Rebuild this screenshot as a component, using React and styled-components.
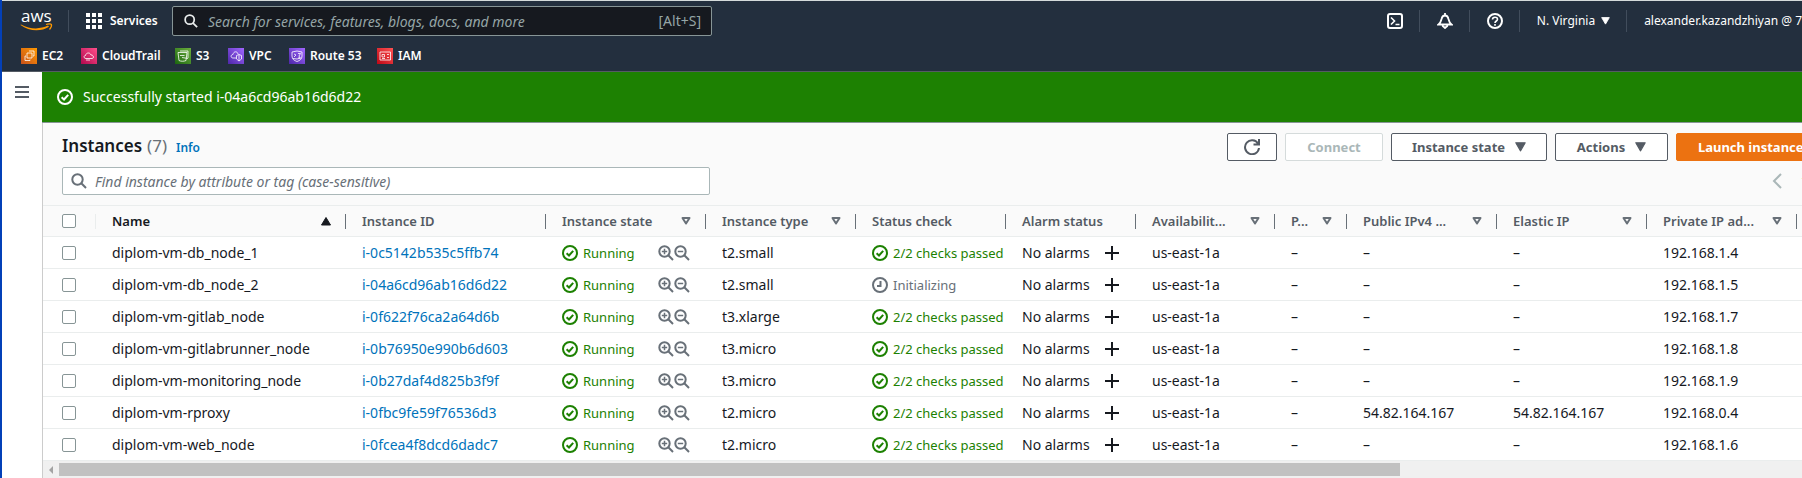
import React from "react";
import styled, { createGlobalStyle } from "styled-components";

const GlobalStyle = createGlobalStyle`
  *, *::before, *::after { box-sizing: border-box; }
  body {
    margin: 0;
    background: #fff;
    color: #16191f;
    font-family: "Noto Sans", "Open Sans", sans-serif;
    font-size: 14px;
    line-height: 20px;
  }
  button, input { font-family: inherit; }
`;

const Page = styled.div`
  min-height: 100vh;
  display: flex;
  flex-direction: column;
  overflow: hidden;
  border-left: 2px solid #0340b8;
`;

/* ---------- top navigation ---------- */

const Header = styled.header`
  background: #232f3e;
  border-top: 1px solid #d5dbdb;
  border-bottom: 1px solid #545b64;
  color: #fff;
`;

const TopBar = styled.div`
  display: flex;
  align-items: center;
  height: 42px;
  padding-bottom: 2px;
`;

const HomeLink = styled.a`
  display: flex;
  padding: 0 14px 0 18px;
`;

const Divider = styled.span`
  flex: none;
  width: 1px;
  height: 22px;
  background: #414d5c;
`;

const NavButton = styled.button`
  display: flex;
  align-items: center;
  gap: ${(p) => p.$gap || 8}px;
  flex: none;
  width: ${(p) => (p.$width ? p.$width + "px" : "auto")};
  height: 30px;
  padding: 0 16px 0 17px;
  border: 0;
  background: none;
  color: #fff;
  font-size: 12px;
  font-weight: ${(p) => (p.$strong ? 600 : 400)};
  line-height: 16px;
  white-space: nowrap;
  &:last-child { padding-right: 0; }
`;

const GlobalSearch = styled.label`
  display: flex;
  align-items: center;
  flex: 0 1 540px;
  height: 30px;
  padding: 0 10px 0 11px;
  border: 1px solid #879596;
  border-radius: 2px;
  background: #16191f;
  color: #95a5a6;
`;

const SearchInput = styled.input`
  flex: 1;
  min-width: 0;
  margin-left: ${(p) => p.$inset}px;
  padding: 0;
  border: 0;
  outline: 0;
  background: none;
  color: inherit;
  font-size: 14px;
  &::placeholder { color: ${(p) => p.$hint}; font-style: italic; opacity: 1; }
`;

const NavGroup = styled.nav`
  display: flex;
  align-items: center;
  flex: none;
  margin-left: auto;
`;

const Favorites = styled.nav`
  display: flex;
  align-items: flex-start;
  height: 28px;
  padding: 5px 19px 0;
`;

const Favorite = styled.a`
  display: flex;
  align-items: center;
  gap: 5px;
  flex: none;
  width: ${(p) => p.$width}px;
  height: 16px;
  color: #fff;
  font-size: 12px;
  font-weight: 600;
  line-height: 16px;
  text-decoration: none;
  white-space: nowrap;
`;

/* ---------- page body ---------- */

const Body = styled.div`
  flex: 1;
  display: flex;
`;

const Rail = styled.aside`
  flex: none;
  width: 40px;
  padding: 13px;
`;

const MenuButton = styled.button`
  display: block;
  padding: 0;
  border: 0;
  background: none;
  line-height: 0;
`;

const Main = styled.main`
  flex: 1;
  min-width: 0;
  display: flex;
  flex-direction: column;
`;

const Flash = styled.div`
  display: flex;
  align-items: center;
  gap: 10px;
  height: 51px;
  padding: 0 15px;
  border-bottom: 1px solid #879596;
  background: #1d8102;
  color: #fff;
`;

const Panel = styled.section`
  flex: 1;
  display: flex;
  flex-direction: column;
  border-left: 1px solid #ccc;
  background: #fff;
`;

const PanelHeader = styled.div`
  padding: 10px 0 10px 19px;
  background: #fafafa;
`;

const PanelRow = styled.div`
  display: flex;
  align-items: center;
  justify-content: space-between;
  height: ${(p) => p.$height}px;
  margin-bottom: ${(p) => p.$after || 0}px;
`;

const Title = styled.h1`
  display: flex;
  align-items: baseline;
  margin: 0;
  font-size: 17px;
  line-height: 22px;
  font-weight: 600;
`;

const Count = styled.span`
  margin-left: 5px;
  color: #687078;
  font-weight: 400;
`;

const InfoLink = styled.a`
  margin-left: 9px;
  color: #0073bb;
  font-size: 12px;
  font-weight: 600;
  text-decoration: none;
`;

const ButtonGroup = styled.div`
  display: flex;
  gap: 8px;
  flex: none;
  margin-right: -30px;
`;

const tones = {
  normal: ["#fff", "#545b64", "#545b64"],
  disabled: ["#fff", "#d5dbdb", "#aab7b8"],
  primary: ["#ec7211", "#ec7211", "#fff"],
};

const Button = styled.button`
  display: flex;
  align-items: center;
  justify-content: center;
  gap: 10px;
  flex: none;
  width: ${(p) => p.$width}px;
  height: 28px;
  padding: 0;
  border: 1px solid ${(p) => tones[p.$tone || "normal"][1]};
  border-radius: 2px;
  background: ${(p) => tones[p.$tone || "normal"][0]};
  color: ${(p) => tones[p.$tone || "normal"][2]};
  font-size: 13px;
  font-weight: 700;
  line-height: 20px;
  white-space: nowrap;
`;

const FilterBox = styled.label`
  display: flex;
  align-items: center;
  flex: 0 1 648px;
  height: 28px;
  padding: 0 8px;
  border: 1px solid #aab7b8;
  border-radius: 2px;
  background: #fff;
`;

const Pager = styled.nav`
  display: flex;
  align-items: center;
  gap: 19px;
  flex: none;
  margin-right: -7px;
`;

const PagerButton = styled.button`
  padding: 0;
  border: 0;
  background: none;
  color: ${(p) => (p.disabled ? "#aab7b8" : "#ec7211")};
  font-size: 14px;
  font-weight: 600;
  line-height: 0;
`;

/* ---------- table ---------- */

const TableClip = styled.div`
  overflow: hidden;
`;

const Table = styled.table`
  width: 100%;
  table-layout: fixed;
  border-collapse: separate;
  border-spacing: 0;
`;

const Col = styled.col`
  width: ${(p) => (p.$width ? p.$width + "px" : "auto")};
`;

const HeadCell = styled.th`
  height: 32px;
  padding: 0;
  border-top: 1px solid #eaeded;
  border-bottom: 1px solid #eaeded;
  background: #fafafa;
  text-align: left;
`;

const HeadInner = styled.div`
  display: flex;
  align-items: center;
  height: 15px;
  padding: 0 ${(p) => (p.$tick ? 0 : 14)}px 0 ${(p) => (p.$tick ? 19 : 16)}px;
  border-right: 1px solid ${(p) => (p.$tick ? "#eaeded" : "#687078")};
  color: ${(p) => (p.$active ? "#16191f" : "#545b64")};
  font-size: 13px;
  font-weight: 600;
  line-height: 18px;
`;

const HeadLabel = styled.span`
  flex: 1;
  white-space: nowrap;
`;

const Cell = styled.td`
  height: 32px;
  padding: 0 0 0 ${(p) => (p.$tick ? 19 : 16)}px;
  border-bottom: 1px solid #eaeded;
  font-size: 14px;
  line-height: 20px;
  white-space: nowrap;
  overflow: hidden;
`;

const CellRow = styled.div`
  display: flex;
  align-items: center;
`;

const Status = styled.span`
  display: flex;
  align-items: center;
  gap: 5px;
  font-size: 13px;
  color: ${(p) => (p.$pending ? "#687078" : "#1d8102")};
`;

const StateTools = styled.span`
  display: flex;
  margin-left: auto;
  padding-right: 16px;
`;

const IconButton = styled.button`
  padding: 0;
  border: 0;
  background: none;
  line-height: 0;
`;

const AlarmLabel = styled.span`
  width: 83px;
`;

const IdLink = styled.a`
  color: #0073bb;
  text-decoration: none;
`;

const Checkbox = styled.input`
  appearance: none;
  display: block;
  width: 14px;
  height: 14px;
  margin: 0;
  border: 1px solid #879596;
  border-radius: 2px;
  background: #fff;
`;

const ScrollBar = styled.div`
  display: grid;
  grid-template-columns: 16px 10fr 3fr;
  align-items: center;
  flex: none;
  height: 17px;
  background: #f0f0f0;
`;

const ScrollArrow = styled.span`
  justify-self: center;
  border: 4px solid transparent;
  border-left: 0;
  border-right-color: #a3a3a3;
`;

const ScrollThumb = styled.span`
  height: 13px;
  background: #c1c1c1;
`;

/* ---------- icons ---------- */

const Svg = styled.svg`
  display: block;
  flex: none;
`;

const Icon = ({ size = 16, box = 16, color = "currentColor", stroke = 2, children }) => (
  <Svg width={size} height={size} viewBox={`0 0 ${box} ${box}`} fill="none" stroke={color} strokeWidth={stroke} aria-hidden="true">
    {children}
  </Svg>
);

const Logo = () => (
  <Svg width="34" height="36" viewBox="0 0 34 36" aria-hidden="true">
    <text x="1" y="19" fill="#fff" fontSize="17" fontFamily="Open Sans, sans-serif">aws</text>
    <path d="M0.500 22C9 28.500 21 29 29 23.800L28 22.600C20 26.500 10 26.500 1 21.400Z" fill="#f90" />
    <path d="M26 21.500C28 20.600 31 20.700 31.400 21.500C31.800 22.700 30.800 25 29.500 26.500" fill="none" stroke="#f90" strokeWidth="1.300" />
  </Svg>
);

const Waffle = () => (
  <Svg width="16" height="16" viewBox="0 0 16 16" fill="#fff" aria-hidden="true">
    {[0, 6, 12].map((y) => [0, 6, 12].map((x) => <rect key={x + "-" + y} x={x} y={y} width="4" height="4" />))}
  </Svg>
);

const Magnifier = ({ color, size, inner }) => (
  <Icon size={size} color={color}>
    <circle cx="6.500" cy="6.500" r="5.200" />
    <path d="M10.300 10.300L15 15" />
    {inner}
  </Icon>
);

const CheckIcon = ({ color = "currentColor" }) => (
  <Icon color={color}>
    <circle cx="8" cy="8" r="7" />
    <path d="M4.600 8.300L7 10.500L11.200 5.800" />
  </Icon>
);

const PendingIcon = () => (
  <Icon>
    <circle cx="8" cy="8" r="7" />
    <path d="M8.500 4V9H5" />
  </Icon>
);

const Caret = ({ width = 11, height = 10 }) => (
  <Svg width={width} height={height} viewBox="0 0 10 9" fill="currentColor" stroke="currentColor" strokeLinejoin="round" aria-hidden="true">
    <path d="M0.700 0.700H9.300L5 8Z" />
  </Svg>
);

const SortIcon = ({ active }) => (
  <Icon size={10} box={10} stroke={active ? 1 : 2} color={active ? "#16191f" : "#687078"}>
    {active ? <path d="M0.500 9L5 1.500L9.500 9Z" fill="#16191f" /> : <path d="M1.500 2H8.500L5 7.500Z" strokeLinejoin="round" />}
  </Icon>
);

const ServiceIcon = ({ name }) => {
  const art = {
    ec2: { from: "#c8511b", to: "#f90", d: "M6 5H11V10H6ZM4 8V12.500H9V11.500M8 3H13V8H12M4 8H5" },
    trail: { from: "#b0084d", to: "#ff4f8b", d: "M5 10.500C2.500 10.500 2.500 7.500 4.500 7.500C5 4.500 9 4 10 7C12.500 6.500 13.500 10.500 11 10.500ZM5 12H9" },
    s3: { from: "#1b660f", to: "#6cae3e", d: "M3 4.500H12L11 12.500C9 13.500 6 13.500 4 12.500ZM5 3H13V10M5 7.500H9.500M7 9.500L13 10.500" },
    vpc: { from: "#4d27a8", to: "#a166ff", d: "M8 10H5C2.500 10 2.500 6.500 5 6.500C5.500 3 9.500 3 10 6M8.500 7.500L11 6.500L13.500 7.500V11L11 13L8.500 11ZM11 6.500V13" },
    route: { from: "#4d27a8", to: "#a166ff", d: "M3 4L8 3L13 4V8C13 11 11 12.500 8 13.500C5 12.500 3 11 3 8ZM5 6L7 7L5 9M9 5.500H11.500L10 8L11 10H9M4 10.500L8 11L12 10" },
    iam: { from: "#bd0816", to: "#ff5252", d: "M3 4H13.500V12H3ZM5 6.500H7.500V9H5ZM5 10.500H8M10 9.500H12M10 6.500H12" },
  }[name];
  return (
    <Svg width="16" height="16" viewBox="0 0 16 16" fill="none" aria-hidden="true">
      <defs>
        <linearGradient id={"g-" + name} x1="0" y1="1" x2="1" y2="0">
          <stop offset="0" stopColor={art.from} />
          <stop offset="1" stopColor={art.to} />
        </linearGradient>
      </defs>
      <rect width="16" height="16" fill={`url(#g-${name})`} />
      <path d={art.d} stroke="#fff" strokeWidth="0.800" />
    </Svg>
  );
};

/* ---------- data ---------- */

const favorites = [
  { icon: "ec2", label: "EC2", width: 60 },
  { icon: "trail", label: "CloudTrail", width: 94 },
  { icon: "s3", label: "S3", width: 53 },
  { icon: "vpc", label: "VPC", width: 61 },
  { icon: "route", label: "Route 53", width: 88 },
  { icon: "iam", label: "IAM", width: 60 },
];

const columns = [
  { label: "Name", width: 250, sort: true, active: true },
  { label: "Instance ID", width: 200 },
  { label: "Instance state", width: 160, sort: true },
  { label: "Instance type", width: 150, sort: true },
  { label: "Status check", width: 150 },
  { label: "Alarm status", width: 130 },
  { label: "Availabilit...", width: 139, sort: true },
  { label: "P...", width: 72, sort: true },
  { label: "Public IPv4 ...", width: 150, sort: true },
  { label: "Elastic IP", width: 150, sort: true },
  { label: "Private IP ad...", width: 150, sort: true },
];

const instances = [
  ["diplom-vm-db_node_1", "i-0c5142b535c5ffb74", "t2.small", true, "–", "192.168.1.4"],
  ["diplom-vm-db_node_2", "i-04a6cd96ab16d6d22", "t2.small", false, "–", "192.168.1.5"],
  ["diplom-vm-gitlab_node", "i-0f622f76ca2a64d6b", "t3.xlarge", true, "–", "192.168.1.7"],
  ["diplom-vm-gitlabrunner_node", "i-0b76950e990b6d603", "t3.micro", true, "–", "192.168.1.8"],
  ["diplom-vm-monitoring_node", "i-0b27daf4d825b3f9f", "t3.micro", true, "–", "192.168.1.9"],
  ["diplom-vm-rproxy", "i-0fbc9fe59f76536d3", "t2.micro", true, "54.82.164.167", "192.168.0.4"],
  ["diplom-vm-web_node", "i-0fcea4f8dcd6dadc7", "t2.micro", true, "–", "192.168.1.6"],
];

const InstanceRow = ({ data: [name, id, type, passed, publicIp, privateIp] }) => (
  <tr>
    <Cell $tick><Checkbox type="checkbox" aria-label={`Select ${name}`} /></Cell>
    <Cell>{name}</Cell>
    <Cell><IdLink href={`#${id}`}>{id}</IdLink></Cell>
    <Cell>
      <CellRow>
        <Status><CheckIcon />Running</Status>
        <StateTools>
          <IconButton aria-label="Add filter">
            <Magnifier color="#687078" inner={<path d="M6.500 3.800V9.200M3.800 6.500H9.200" strokeWidth="1.500" />} />
          </IconButton>
          <IconButton aria-label="Exclude filter">
            <Magnifier color="#687078" inner={<path d="M3.800 6.500H9.200" strokeWidth="1.500" />} />
          </IconButton>
        </StateTools>
      </CellRow>
    </Cell>
    <Cell>{type}</Cell>
    <Cell>
      <Status $pending={!passed}>
        {passed ? <CheckIcon /> : <PendingIcon />}
        {passed ? "2/2 checks passed" : "Initializing"}
      </Status>
    </Cell>
    <Cell>
      <CellRow>
        <AlarmLabel>No alarms</AlarmLabel>
        <IconButton aria-label="Add alarm">
          <Icon size={14} box={14} color="#16191f"><path d="M7 0V14M0 7H14" /></Icon>
        </IconButton>
      </CellRow>
    </Cell>
    <Cell>us-east-1a</Cell>
    <Cell>–</Cell>
    <Cell>{publicIp}</Cell>
    <Cell>{publicIp}</Cell>
    <Cell>{privateIp}</Cell>
    <Cell />
  </tr>
);

export default function App() {
  return (
    <Page>
      <GlobalStyle />
      <Header>
        <TopBar>
          <HomeLink href="#home" aria-label="AWS home"><Logo /></HomeLink>
          <Divider />
          <NavButton $strong $width={103}><Waffle />Services</NavButton>
          <GlobalSearch>
            <Magnifier color="#eaeded" size={14} />
            <SearchInput type="text" $inset={10} $hint="#95a5a6" aria-label="Search" placeholder="Search for services, features, blogs, docs, and more" />
            <span>[Alt+S]</span>
          </GlobalSearch>
          <NavGroup>
            <NavButton aria-label="CloudShell">
              <Icon><rect x="1" y="1" width="14" height="14" rx="2" /><path d="M4 4.500L7.500 8L4 11.500M8.500 11.500H12.500" strokeWidth="1.600" /></Icon>
            </NavButton>
            <Divider />
            <NavButton aria-label="Notifications">
              <Icon stroke={1.8}><path d="M1.500 11.500H14.500C12 9.500 12 8 11.500 6C11 3.500 9.500 2.500 8 2.500C6.500 2.500 5 3.500 4.500 6C4 8 4 9.500 1.500 11.500ZM8 0V2.500M5.800 12V13L8 15L10.200 13V12" /></Icon>
            </NavButton>
            <Divider />
            <NavButton aria-label="Help">
              <Icon><circle cx="8" cy="8" r="7" /><path d="M5.500 6.500C5.500 3.500 10.500 3.500 10.500 6.300C10.500 8 8 8 8 10M8 11V12.800" strokeWidth="1.600" /></Icon>
            </NavButton>
            <Divider />
            <NavButton $gap={6}>N. Virginia<Caret width={9} height={8} /></NavButton>
            <Divider />
            <NavButton>alexander.kazandzhiyan @ 7</NavButton>
          </NavGroup>
        </TopBar>
        <Favorites>
          {favorites.map((f) => (
            <Favorite key={f.icon} href={`#${f.icon}`} $width={f.width}><ServiceIcon name={f.icon} />{f.label}</Favorite>
          ))}
        </Favorites>
      </Header>

      <Body>
        <Rail>
          <MenuButton aria-label="Open navigation">
            <Icon size={14} box={14} color="#545b64"><path d="M0 2H14M0 7H14M0 12H14" /></Icon>
          </MenuButton>
        </Rail>
        <Main>
          <Flash role="status"><CheckIcon />Successfully started i-04a6cd96ab16d6d22</Flash>
          <Panel>
            <PanelHeader>
              <PanelRow $height={28} $after={6}>
                <Title>Instances<Count>(7)</Count><InfoLink href="#info">Info</InfoLink></Title>
                <ButtonGroup>
                  <Button $width={50} aria-label="Refresh">
                    <Icon><path d="M14 4.500A7 7 0 1 0 15 9M15 0V5.500H9.500" /></Icon>
                  </Button>
                  <Button $width={98} $tone="disabled" disabled>Connect</Button>
                  <Button $width={156}>Instance state<Caret /></Button>
                  <Button $width={113}>Actions<Caret /></Button>
                  <Button $width={156} $tone="primary">Launch instances</Button>
                </ButtonGroup>
              </PanelRow>
              <PanelRow $height={28}>
                <FilterBox>
                  <Magnifier color="#687078" size={16} />
                  <SearchInput type="text" $inset={8} $hint="#687078" aria-label="Find instance" placeholder="Find instance by attribute or tag (case-sensitive)" />
                </FilterBox>
                <Pager>
                  <PagerButton disabled aria-label="Previous page">
                    <Svg width="10" height="16" viewBox="0 0 10 16" fill="none" stroke="currentColor" strokeWidth="2" aria-hidden="true">
                      <path d="M9 1L2 8L9 15" />
                    </Svg>
                  </PagerButton>
                  <PagerButton>1</PagerButton>
                </Pager>
              </PanelRow>
            </PanelHeader>
            <TableClip>
              <Table>
                <colgroup>
                  <Col $width={53} />
                  {columns.map((c) => <Col key={c.label} $width={c.width} />)}
                  <Col />
                </colgroup>
                <thead>
                  <tr>
                    <HeadCell><HeadInner $tick><Checkbox type="checkbox" aria-label="Select all instances" /></HeadInner></HeadCell>
                    {columns.map((c) => (
                      <HeadCell key={c.label} scope="col">
                        <HeadInner $active={c.active}>
                          <HeadLabel>{c.label}</HeadLabel>
                          {c.sort && <SortIcon active={c.active} />}
                        </HeadInner>
                      </HeadCell>
                    ))}
                    <HeadCell />
                  </tr>
                </thead>
                <tbody>
                  {instances.map((row) => <InstanceRow key={row[1]} data={row} />)}
                </tbody>
              </Table>
            </TableClip>
            <ScrollBar aria-hidden="true"><ScrollArrow /><ScrollThumb /></ScrollBar>
          </Panel>
        </Main>
      </Body>
    </Page>
  );
}
